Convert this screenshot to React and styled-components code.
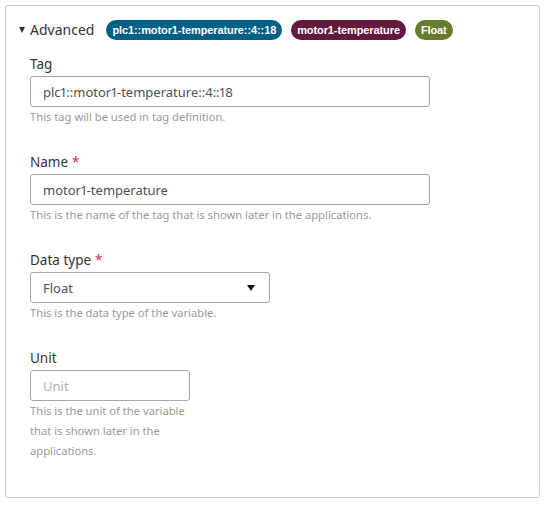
import React from "react";
import styled, { createGlobalStyle } from "styled-components";

const Global = createGlobalStyle`
  html, body { margin: 0; padding: 0; background: #fff; }
  body {
    font-family: "Noto Sans", "Open Sans", sans-serif;
    font-variant-numeric: proportional-nums;
  }
`;

const Page = styled.div`
  padding: 5px 8px 8px 5px;
  width: 548px;
  box-sizing: border-box;
`;

const Panel = styled.section`
  border: 1px solid #c9c9c9;
  border-radius: 3px;
  height: 493px;
  box-sizing: border-box;
  padding: 13px 24px 0 13px;
`;

const Header = styled.div`
  display: flex;
  align-items: center;
  height: 21px;
`;

const Toggle = styled.button`
  display: flex;
  align-items: center;
  gap: 5px;
  background: none;
  border: 0;
  padding: 0;
  margin: 0 12px 0 0;
  font: inherit;
  font-size: 14px;
  line-height: 20px;
  color: #333;
  cursor: pointer;
`;

const Caret = styled.span`
  width: 0;
  height: 0;
  border-left: 3.5px solid transparent;
  border-right: 3.5px solid transparent;
  border-top: 6px solid #333;
  margin-top: 1px;
`;

const Chips = styled.div`
  display: flex;
  gap: 9px;
`;

const Chip = styled.span`
  display: inline-flex;
  align-items: center;
  height: 20px;
  padding: 0 6px;
  border-radius: 10px;
  background: ${(p) => p.$bg};
  color: #fff;
  font-family: "Liberation Sans", Arial, sans-serif;
  font-weight: 700;
  font-size: 11px;
  letter-spacing: -0.1px;
`;

const Form = styled.div`
  display: flex;
  flex-direction: column;
  padding-left: 11px;
  padding-top: 14px;
  gap: 25px;
`;

const Field = styled.div`
  display: flex;
  flex-direction: column;
`;

const Label = styled.label`
  display: flex;
  align-items: center;
  font-size: 13.5px;
  color: #333;
  line-height: 20px;
  height: 20px;
  margin-bottom: 2px;
`;

const Required = styled.span`
  color: #e0243c;
  margin-left: 4px;
  line-height: 20px;
`;

const Input = styled.input`
  width: ${(p) => p.$w}px;
  height: 31px;
  box-sizing: border-box;
  border: 1px solid #a7a7a7;
  border-radius: 3px;
  padding: 0 12px;
  font: inherit;
  font-size: 13px;
  font-variant-numeric: proportional-nums;
  color: #505050;
  outline: none;
  &::placeholder { color: #b0b0b0; }
`;

const Select = styled.div`
  width: ${(p) => p.$w}px;
  height: 31px;
  box-sizing: border-box;
  border: 1px solid #a7a7a7;
  border-radius: 3px;
  padding: 0 14px 0 12px;
  display: flex;
  align-items: center;
  justify-content: space-between;
  font-size: 13px;
  color: #505050;
`;

const SelectCaret = styled.span`
  width: 0;
  height: 0;
  border-left: 4px solid transparent;
  border-right: 4px solid transparent;
  border-top: 6px solid #111;
`;

const Help = styled.div`
  font-size: 11.2px;
  color: #999;
  line-height: 20px;
  max-width: ${(p) => (p.$w ? `${p.$w}px` : "none")};
`;

export default function App() {
  return (
    <>
      <Global />
      <Page>
        <Panel>
          <Header>
            <Toggle>
              <Caret />
              Advanced
            </Toggle>
            <Chips>
              <Chip $bg="#005f87">plc1::motor1-temperature::4::18</Chip>
              <Chip $bg="#64193f">motor1-temperature</Chip>
              <Chip $bg="#687b2c">Float</Chip>
            </Chips>
          </Header>
          <Form>
            <Field>
              <Label>Tag</Label>
              <Input $w={400} defaultValue="plc1::motor1-temperature::4::18" />
              <Help>This tag will be used in tag definition.</Help>
            </Field>
            <Field>
              <Label>
                Name<Required>*</Required>
              </Label>
              <Input $w={400} defaultValue="motor1-temperature" />
              <Help>This is the name of the tag that is shown later in the applications.</Help>
            </Field>
            <Field>
              <Label>
                Data type<Required>*</Required>
              </Label>
              <Select $w={240}>
                Float
                <SelectCaret />
              </Select>
              <Help>This is the data type of the variable.</Help>
            </Field>
            <Field>
              <Label>Unit</Label>
              <Input $w={160} placeholder="Unit" />
              <Help $w={162}>This is the unit of the variable that is shown later in the applications.</Help>
            </Field>
          </Form>
        </Panel>
      </Page>
    </>
  );
}
